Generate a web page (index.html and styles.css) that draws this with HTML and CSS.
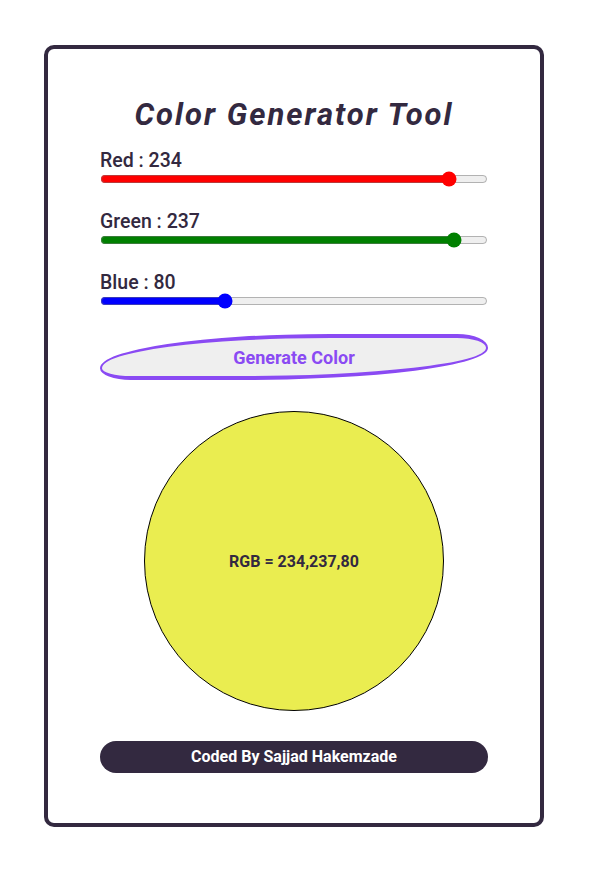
FILE: index.html
```html
<!DOCTYPE html>
<html lang="en">
<head>
    <meta charset="UTF-8">
    <meta name="viewport" content="width=device-width, initial-scale=1.0">
    <title>Color Generator Tool</title>
    <link rel="stylesheet" href="styles.css">
</head>
<body>
    <div class="container">
        <h1 class="title">Color Generator Tool</h1>

        <div class="group">
            <label for="red">Red : <span id="redVal">234</span></label>
            <input type="range" id="red" class="slider red" min="0" max="255" value="234">
        </div>
        <div class="group">
            <label for="green">Green : <span id="greenVal">237</span></label>
            <input type="range" id="green" class="slider green" min="0" max="255" value="237">
        </div>
        <div class="group">
            <label for="blue">Blue : <span id="blueVal">80</span></label>
            <input type="range" id="blue" class="slider blue" min="0" max="255" value="80">
        </div>

        <button class="generate" onclick="generateColor()">Generate Color</button>

        <div class="circle" id="circle">
            <span id="rgbText">RGB = 234,237,80</span>
        </div>

        <div class="footer">Coded By Sajjad Hakemzade</div>
    </div>

    <script>
        const sliders = ["red", "green", "blue"];

        sliders.forEach(function (name) {
            document.getElementById(name).addEventListener("input", function () {
                document.getElementById(name + "Val").textContent = this.value;
            });
        });

        function generateColor() {
            let r = document.getElementById("red").value;
            let g = document.getElementById("green").value;
            let b = document.getElementById("blue").value;

            document.getElementById("circle").style.backgroundColor = "rgb(" + r + "," + g + "," + b + ")";
            document.getElementById("rgbText").textContent = "RGB = " + r + "," + g + "," + b;
        }

        generateColor();
    </script>
</body>
</html>
```

FILE: styles.css
```css
body {
    font-family: Roboto, "Liberation Sans", sans-serif;
    background-color: #ffffff;
    margin: 0;
    padding: 0;
    color: #332940;
}
.container {
    box-sizing: border-box;
    width: 500px;
    margin: 45px 0 0 44px;
    padding: 47px 52px 50px;
    border: 4px solid #332940;
    border-radius: 10px;
    display: flex;
    flex-direction: column;
}
.title {
    margin: 0 0 17px;
    font-size: 31px;
    font-style: italic;
    font-weight: bold;
    letter-spacing: 2px;
    text-align: center;
}
.group {
    display: flex;
    flex-direction: column;
    margin-bottom: 24px;
}
.group label {
    font-family: "Roboto Medium", Roboto, sans-serif;
    font-size: 19.5px;
    line-height: 21px;
    font-weight: 500;
}
.slider {
    display: block;
    width: 100%;
    height: 16px;
    margin: 0;
}
.slider.red {
    accent-color: #ff0000;
}
.slider.green {
    accent-color: #008000;
}
.slider.blue {
    accent-color: #0000ff;
}
.generate {
    height: 46px;
    margin-top: 1px;
    background: #efefef;
    color: #8a4af3;
    border: solid #8a4af3;
    border-width: 4px 2px;
    border-radius: 60% 8% 65% 8% / 75% 30% 70% 26%;
    font-family: inherit;
    font-size: 18px;
    font-weight: bold;
    cursor: pointer;
}
.circle {
    box-sizing: border-box;
    width: 300px;
    height: 300px;
    margin: 31px auto 0;
    border: 1px solid #000000;
    border-radius: 50%;
    display: flex;
    align-items: center;
    justify-content: center;
    font-size: 16px;
    font-weight: bold;
}
.footer {
    margin-top: 30px;
    height: 32px;
    line-height: 32px;
    border-radius: 16px;
    background: #332940;
    color: #ffffff;
    text-align: center;
    font-size: 16px;
    font-weight: bold;
}
```
